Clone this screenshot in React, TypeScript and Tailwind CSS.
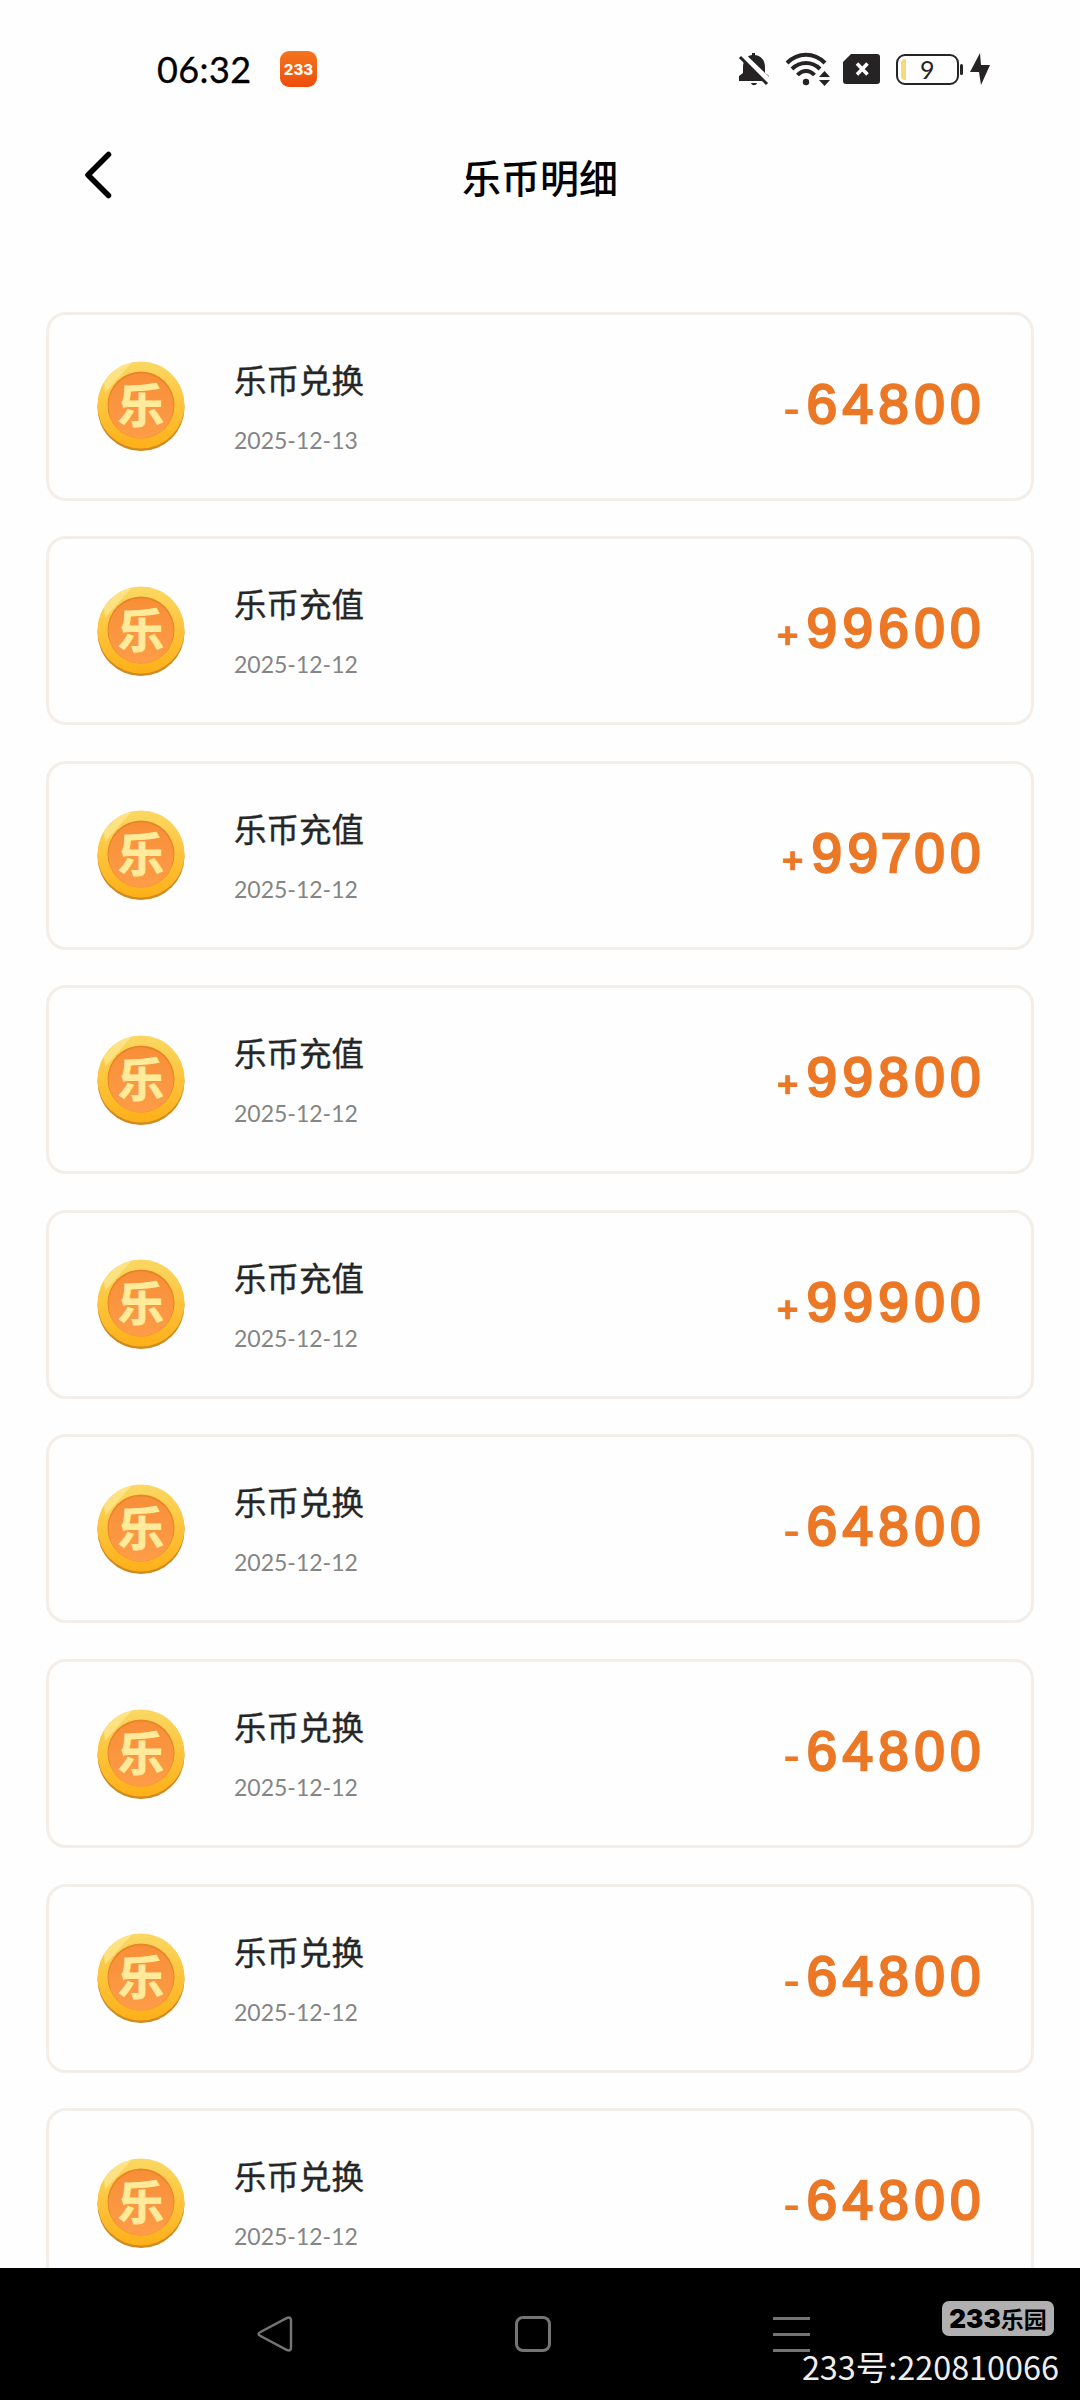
const records = [
  { title: "乐币兑换", date: "2025-12-13", sign: "-", amount: "64800" },
  { title: "乐币充值", date: "2025-12-12", sign: "+", amount: "99600" },
  { title: "乐币充值", date: "2025-12-12", sign: "+", amount: "99700" },
  { title: "乐币充值", date: "2025-12-12", sign: "+", amount: "99800" },
  { title: "乐币充值", date: "2025-12-12", sign: "+", amount: "99900" },
  { title: "乐币兑换", date: "2025-12-12", sign: "-", amount: "64800" },
  { title: "乐币兑换", date: "2025-12-12", sign: "-", amount: "64800" },
  { title: "乐币兑换", date: "2025-12-12", sign: "-", amount: "64800" },
  { title: "乐币兑换", date: "2025-12-12", sign: "-", amount: "64800" },
];

function StatusBar() {
  return (
    <div className="flex h-[138px] items-center justify-between pl-[157px] pr-[90px]">
      <div className="flex items-center">
        <span className="w-[123px] font-['Lato',sans-serif] text-[36px] leading-none tracking-[0.4px] [-webkit-text-stroke:0.3px]">
          06:32
        </span>
        <div className="flex h-[36px] w-[37px] items-center justify-center rounded-[9px] bg-linear-to-b from-[#f5741d] to-[#ee4d0c]">
          <span className="font-['Inter',sans-serif] text-[15px] font-extrabold leading-none text-white">
            233
          </span>
        </div>
      </div>
      <div className="flex items-center text-[#262324]">
        <svg width="32" height="34" viewBox="0 0 32 34" fill="currentColor">
          <path d="M14 1h3v2c7 1 10 6 10 12v6l4 3v5H1v-5l4-3v-6C5 9 8 4 14 3z" />
          <path d="M13 31h6c-1 3-5 3-6 0z" />
          <path d="M0 0v7l8 0z" fill="#fefefe" />
          <path d="M4 3l27 26" stroke="#fefefe" strokeWidth="6" />
          <path d="M2 5l27 27" stroke="currentColor" strokeWidth="3" />
        </svg>
        <svg
          className="ml-[15px]"
          width="46"
          height="34"
          viewBox="0 0 46 34"
          fill="none"
          stroke="currentColor"
          strokeWidth="4"
        >
          <path d="M2 11C13 0 29 0 40 11" />
          <path d="M7 17C15 9 27 9 35 17" />
          <path d="M12.500 23c5-5.500 12-5.500 17 0" />
          <circle cx="21" cy="30" r="3.200" fill="currentColor" stroke="none" />
          <path d="M34 25l5.500-6 5.500 6zM34 28l5.500 6 5.500-6z" fill="currentColor" stroke="none" />
        </svg>
        <svg className="ml-[12px]" width="38" height="32" viewBox="0 0 38 32">
          <path d="M8 1h26a3 3 0 0 1 3 3v24a3 3 0 0 1-3 3H3a3 3 0 0 1-3-3V9z" fill="currentColor" />
          <path d="M14 10.500l10.500 11M24.500 10.500L14 21.500" stroke="#fff" strokeWidth="3.500" />
        </svg>
        <div className="ml-[15px] flex h-[31px] w-[63px] items-center rounded-[9px] border-2 border-[#262324] pl-[3px]">
          <div className="h-[21px] w-[5px] rounded-l-sm bg-[#f3dc7c]" />
          <span className="ml-[14px] font-['Lato',sans-serif] text-[25px] leading-none">
            9
          </span>
        </div>
        <div className="ml-px h-[11px] w-[3px] rounded-sm bg-[#262324]" />
        <svg className="ml-[7px]" width="20" height="34" viewBox="0 0 20 34">
          <path d="M10 1L0 20h9l2 13 9-20h-9z" fill="currentColor" />
        </svg>
      </div>
    </div>
  );
}

function Header() {
  return (
    <div className="flex h-[74px] items-center justify-between px-[84px]">
      <svg width="28" height="48" viewBox="0 0 28 48" fill="none">
        <path
          d="M24.500 3.500L4 24 24.500 44.500"
          stroke="#000"
          strokeWidth="5.500"
          strokeLinecap="round"
          strokeLinejoin="round"
        />
      </svg>
      <h1 className="pt-[2px] font-['Noto_Sans_CJK_SC',sans-serif] text-[39px] font-medium leading-none">
        乐币明细
      </h1>
      <div className="w-[28px]" />
    </div>
  );
}

function Coin() {
  return (
    <svg width="90" height="92" viewBox="0 0 90 92">
      <defs>
        <linearGradient id="rim" x1="0" y1="0" x2="0" y2="1">
          <stop offset="0" stopColor="#fad863" />
          <stop offset="0.500" stopColor="#fdc43b" />
          <stop offset="1" stopColor="#fdb018" />
        </linearGradient>
        <linearGradient id="face" x1="0" y1="0" x2="0" y2="1">
          <stop offset="0" stopColor="#f78f38" />
          <stop offset="1" stopColor="#fe9c48" />
        </linearGradient>
        <clipPath id="edge">
          <circle cx="45" cy="45" r="43.500" />
        </clipPath>
      </defs>
      <circle cx="45" cy="47.500" r="43.500" fill="#cf8a22" />
      <circle cx="45" cy="45" r="43.500" fill="url(#rim)" />
      <path d="M8 22L28 0h10L9 33z" fill="#ffeda0" opacity="0.600" clipPath="url(#edge)" />
      <circle cx="45" cy="45" r="33.500" fill="#e98526" />
      <circle cx="45" cy="46" r="32.500" fill="url(#face)" />
      <text
        x="45"
        y="62"
        textAnchor="middle"
        className="font-['Noto_Sans_CJK_SC',sans-serif] text-[46px] font-bold"
        fill="#ffeb9a"
        stroke="#ffeb9a"
        strokeWidth="1"
      >
        乐
      </text>
    </svg>
  );
}

function Amount({ value }: { value: string }) {
  return (
    <span className="-mr-[2px] font-['Liberation_Sans',sans-serif] text-[55px] leading-none tracking-[5.3px] [-webkit-text-stroke:2.4px]">
      {value.split("").map((digit, i) => (
        <span key={i} className={digit === "7" ? "-mx-[2.5px]" : ""}>
          {digit}
        </span>
      ))}
    </span>
  );
}

function RecordCard({ record }: { record: (typeof records)[number] }) {
  return (
    <div className="flex h-[189px] shrink-0 items-center rounded-[20px] border-3 border-[#f4eeea] bg-[#fefefe] px-[47px]">
      <Coin />
      <div className="ml-[48px] flex flex-col">
        <span className="font-['Noto_Sans_CJK_SC',sans-serif] text-[32.5px] leading-[40px] text-[#262626] [-webkit-text-stroke:0.4px]">
          {record.title}
        </span>
        <span className="mt-[27px] font-['Lato',sans-serif] text-[23px] leading-[28px] text-[#858585]">
          {record.date}
        </span>
      </div>
      <div className="ml-auto flex items-baseline pb-[4px] text-[#eb7826]">
        <span className="mr-[6px] font-['Inter',sans-serif] text-[38px] font-bold leading-none">
          {record.sign}
        </span>
        <Amount value={record.amount} />
      </div>
    </div>
  );
}

function NavBar() {
  return (
    <div className="relative flex h-[132px] items-center bg-black pl-[257px]">
      <svg width="38" height="38" viewBox="0 0 38 38" fill="none" stroke="#757373" strokeWidth="2.500">
        <path d="M3.500 17L30 3q4-1.500 4 2.500v27q0 4-4 2.500L3.500 21q-4-2 0-4z" />
      </svg>
      <div className="ml-[220px] h-[36px] w-[36px] rounded-[8px] border-3 border-[#757373]" />
      <div className="ml-[222px] flex flex-col gap-[13px]">
        <div className="h-[3px] w-[37px] bg-[#757373]" />
        <div className="h-[3px] w-[37px] bg-[#757373]" />
        <div className="h-[3px] w-[37px] bg-[#757373]" />
      </div>
      <div className="absolute right-[21px] top-[33px] flex flex-col items-end">
        <div className="mr-[5px] flex h-[35px] w-[112px] items-center justify-center rounded-[7px] bg-[#b1b0b1] text-black">
          <span className="font-['Inter',sans-serif] text-[26px] font-black leading-none">
            233
          </span>
          <span className="font-['Noto_Sans_CJK_SC',sans-serif] text-[23px] font-bold leading-none">
            乐园
          </span>
        </div>
        <span className="mt-[14px] font-['Noto_Sans_CJK_SC',sans-serif] text-[32.4px] leading-[32px] text-[#eeeeee]">
          233号:220810066
        </span>
      </div>
    </div>
  );
}

export default function App() {
  return (
    <div className="flex h-[2400px] w-[1080px] flex-col overflow-hidden bg-[#fefefe] text-black">
      <StatusBar />
      <Header />
      <div className="flex min-h-0 flex-1 flex-col gap-[35.6px] overflow-hidden px-[46px] pt-[99.5px]">
        {records.map((record, i) => (
          <RecordCard key={i} record={record} />
        ))}
      </div>
      <NavBar />
    </div>
  );
}
